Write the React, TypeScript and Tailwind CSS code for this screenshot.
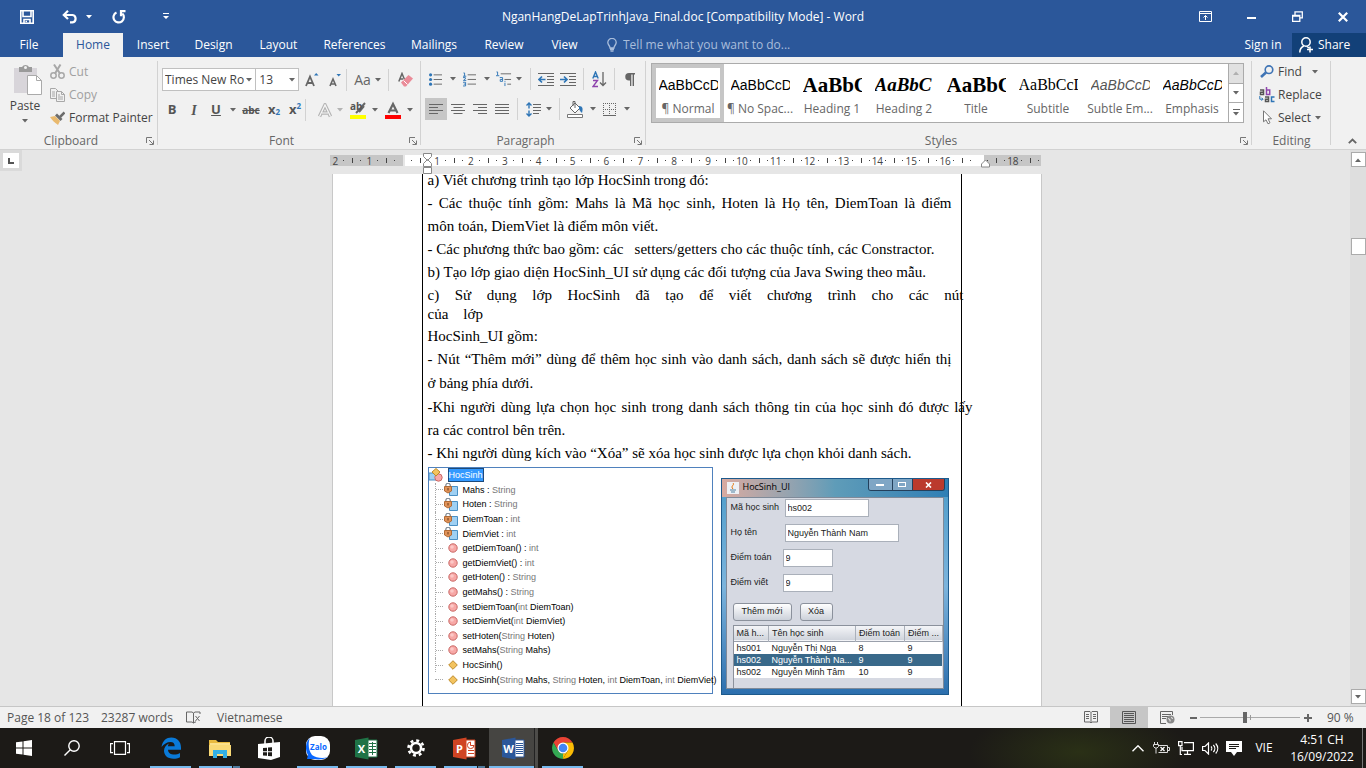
import React from "react";

const Caret = ({ className = "text-[#666]" }: { className?: string }) => (
  <svg width="6" height="4" viewBox="0 0 6 4" className={`shrink-0 ${className}`}>
    <path d="M0 0h6L3 3.5z" fill="currentColor" />
  </svg>
);

const Launcher = () => (
  <button aria-label="Open dialog" className="absolute bottom-1 right-1">
    <svg width="8" height="8" viewBox="0 0 8 8" fill="none" stroke="#777">
      <path d="M.5 6V.5H6M3 3l4 4M7.500 3.500v4h-4" />
    </svg>
  </button>
);

function Group({ label, className, children, launcher = true }: { label: string; className: string; children: React.ReactNode; launcher?: boolean }) {
  return (
    <section aria-label={label} className={`relative flex flex-col ${className}`}>
      <div className="h-[76px] shrink-0">{children}</div>
      <div className={`text-center leading-4 text-[#666] ${launcher ? "pr-4" : ""}`}>{label}</div>
      {launcher && <Launcher />}
      <div className="absolute bottom-1 right-0 top-1 w-px bg-[#d2d2d2]" />
    </section>
  );
}

const Slot = ({ label, className, children }: { label: string; className: string; children: React.ReactNode }) => (
  <button aria-label={label} className={`flex h-[22px] shrink-0 items-center justify-center ${className}`}>
    {children}
  </button>
);
const Sep = () => <span className="block h-[22px] w-px shrink-0 bg-[#d2d2d2]" />;

/* ---------- title bar ---------- */

function TitleBar() {
  return (
    <header className="relative flex h-[33px] shrink-0 items-center justify-between text-white">
      <div className="flex h-[30px] items-center pl-5">
        <button aria-label="Save">
          <svg width="14" height="14" viewBox="0 0 14 14" fill="none" stroke="#fff" strokeWidth="1.6">
            <path d="M.8.8h12.400v12.400H.8zM3 1v5.500h8V1M4 13V9.500h6V13" />
            <path d="M5.500 11.500h1.500" />
          </svg>
        </button>
        <button aria-label="Undo" className="ml-7">
          <svg width="16" height="14" viewBox="0 0 16 14" fill="none" stroke="#fff" strokeWidth="2.2">
            <path d="M2 5h8.500a3.700 3.700 0 0 1 0 7.300H8" />
            <path d="M6 .8L1.800 5 6 9" />
          </svg>
        </button>
        <span className="ml-2"><Caret className="text-white" /></span>
        <button aria-label="Repeat" className="ml-5">
          <svg width="14" height="14" viewBox="0 0 14 14" fill="none" stroke="#fff" strokeWidth="2.200">
            <path d="M4.500 2.500a5.200 5.200 0 1 0 5.800 1" />
            <path d="M13.500 1.200H9v5" />
          </svg>
        </button>
        <button aria-label="Customize toolbar" className="ml-[37px]">
          <svg width="6" height="7" viewBox="0 0 6 7" fill="#fff"><path d="M0 0h6v1H0zM0 3h6L3 6z" /></svg>
        </button>
      </div>
      <h1 className="absolute inset-x-0 text-center">NganHangDeLapTrinhJava_Final.doc [Compatibility Mode] - Word</h1>
      <div className="flex h-[30px] items-center">
        <button aria-label="Ribbon display" className="flex w-[46px] justify-center">
          <svg width="13" height="11" viewBox="0 0 13 11" fill="none" stroke="#fff">
            <path d="M.5.5h12v10H.5zM.5 2.500h12M6.500 9V4.500M4.500 6.500l2-2 2 2" />
          </svg>
        </button>
        <button aria-label="Minimize" className="flex w-[46px] justify-center"><span className="mt-[3px] h-[2px] w-[9px] bg-white" /></button>
        <button aria-label="Restore" className="flex w-[46px] justify-center">
          <svg width="11" height="11" viewBox="0 0 11 11" fill="none" stroke="#fff" strokeWidth="1.300">
            <path d="M.6 4.500h7.200v5.800H.6zM.6 5h7M3 4V.9h7.300v6H8" />
          </svg>
        </button>
        <button aria-label="Close" className="flex w-[46px] justify-center">
          <svg width="10" height="10" viewBox="0 0 10 10" stroke="#fff" strokeWidth="2.200"><path d="M.8.8l8.400 8.400M9.200.8L.8 9.200" /></svg>
        </button>
      </div>
    </header>
  );
}

const tabs: [string, string][] = [
  ["Insert", "w-[60px]"], ["Design", "w-[61px]"], ["Layout", "w-[69px]"], ["References", "w-[83px]"],
  ["Mailings", "w-[76px]"], ["Review", "w-[64px]"], ["View", "w-[57px]"],
];

function TabBar() {
  return (
    <nav className="flex h-6 shrink-0 items-stretch text-white">
      <button className="w-[58px]">File</button>
      <button className="ml-[5px] w-[60px] bg-[#f1f1f1] text-[#2b579a]">Home</button>
      {tabs.map(([t, w]) => <button key={t} className={w}>{t}</button>)}
      <label className="ml-[14px] flex flex-1 items-center text-[#a9bddb]">
        <svg width="10" height="14" viewBox="0 0 10 14" fill="none" stroke="currentColor" strokeWidth="1.300">
          <path d="M3 10C3 7.500.8 7 .8 4.600a4.200 4.200 0 0 1 8.400 0C9.200 7 7 7.500 7 10zM3 11.500h4M3.500 13.200h3" />
        </svg>
        <input aria-label="Tell me" placeholder="Tell me what you want to do..." className="ml-[6px] w-[220px] bg-transparent placeholder:text-[#a9bddb] placeholder:opacity-100" />
      </label>
      <button className="w-[58px]">Sign in</button>
      <button className="flex w-[74px] items-center gap-1 bg-[#124078] pl-[7px]">
        <svg width="15" height="16" viewBox="0 0 15 16" fill="none" stroke="#fff" strokeWidth="1.500">
          <circle cx="7" cy="5" r="4.200" />
          <path d="M.8 15.500c0-3.500 1.800-5.500 4-6.500M8 9.500l2 1.500M11 9.500v6M8 12.500h6" />
        </svg>
        Share
      </button>
    </nav>
  );
}

/* ---------- ribbon ---------- */

function ClipboardGroup() {
  return (
    <Group label="Clipboard" className="w-[158px] shrink-0">
      <div className="flex pt-[3px]">
        <button className="flex w-[50px] flex-col items-center pt-1">
          <svg width="29" height="31" viewBox="0 0 29 31" className="ml-1">
            <path d="M1 4h23v25H1z" fill="#d8d5da" />
            <path d="M6 3h3a4 4 0 0 1 7 0h3v5H6z" fill="#9a9a9a" /><circle cx="12.500" cy="3.500" r="1.500" fill="#f1f1f1" />
            <path d="M14.500 11.500h9l5 5v14h-14z" fill="#fff" stroke="#aaa" /><path d="M23.500 11.500v5h5" fill="none" stroke="#aaa" />
          </svg>
          <span className="mt-[3px] leading-4">Paste</span>
          <span className="mt-[5px]"><Caret /></span>
        </button>
        <div className="flex flex-col">
          <button className="flex h-[23px] items-center gap-1 text-[#a0a0a0]">
            <svg width="15" height="15" viewBox="0 0 15 15" fill="none" stroke="#a8a8a8" strokeWidth="1.500">
              <path d="M4 .5l6 9M10.500.5L5 9.500" strokeWidth="2" /><circle cx="3.500" cy="11.500" r="2.700" /><circle cx="11.500" cy="11.500" r="2.700" />
            </svg>
            Cut
          </button>
          <button className="flex h-[23px] items-center gap-1 text-[#a0a0a0]">
            <svg width="15" height="14" viewBox="0 0 15 14" fill="#f1f1f1" stroke="#a8a8a8">
              <path d="M.5.500h5l2.500 2.500v7.500H.5zM2 4h3M2 6h3M2 8h3" />
              <path d="M6.500 3.500h5l3 3v7h-8zM11.500 3.500v3h3M8 7h2M8 9h5M8 11h5" />
            </svg>
            Copy
          </button>
          <button className="flex h-[23px] items-center gap-1 whitespace-nowrap">
            <svg width="15" height="14" viewBox="0 0 15 14">
              <path d="M0 6l5-1 5 5-2 4C5 12 2 9 0 6z" fill="#e9b96e" />
              <path d="M5 4.500l2-2 5.500 5.500-2 2z" fill="#6c6c6c" /><path d="M10 6l4.500-4.500" stroke="#6c6c6c" strokeWidth="2.500" />
            </svg>
            Format Painter
          </button>
        </div>
      </div>
    </Group>
  );
}

function FontGroup() {
  return (
    <Group label="Font" className="w-[263px] shrink-0">
      <div className="flex items-center pl-1 pt-[11px]">
        <label className="relative flex w-[95px] items-center">
          <select aria-label="Font name" className="h-[23px] w-full appearance-none border border-[#c0c0c0] bg-white pl-[2px] text-[#444]"><option>Times New Ro</option></select>
          <span className="pointer-events-none absolute right-1"><Caret /></span>
        </label>
        <label className="relative -ml-px flex w-11 items-center">
          <select aria-label="Font size" className="h-[23px] w-full appearance-none border border-[#c0c0c0] bg-white pl-[3px] text-[#444]"><option>13</option></select>
          <span className="pointer-events-none absolute right-1"><Caret /></span>
        </label>
        <Slot label="Grow font" className="w-[25px]">
          <svg width="14" height="15" viewBox="0 0 14 15" fill="none"><path d="M1 14L5 4.500 9 14M2.500 11h5" stroke="#666" strokeWidth="1.800" /><path d="M9 3.500h4.500L11.200 1z" fill="#2e75b6" /></svg>
        </Slot>
        <Slot label="Shrink font" className="w-[22px]">
          <svg width="13" height="14" viewBox="0 0 13 14" fill="none"><path d="M1 13l3-7 3 7M2 11h4" stroke="#666" strokeWidth="1.600" /><path d="M7.500 1H12L9.700 3.500z" fill="#2e75b6" /></svg>
        </Slot>
        <Sep />
        <Slot label="Change case" className="w-[41px] gap-1 text-[14px] text-[#666]">Aa<Caret /></Slot>
        <Sep />
        <Slot label="Clear formatting" className="w-8">
          <svg width="15" height="15" viewBox="0 0 15 15" fill="none">
            <path d="M.8 9.500L4 1.500l2.500 6M2 7h3" stroke="#666" strokeWidth="1.500" />
            <path d="M3 10.500L10.500 3 15 6.500 8 14.500H6z" fill="#ea8b98" /><path d="M5.500 8.500l4 4" stroke="#fff" />
          </svg>
        </Slot>
      </div>
      <div className="flex items-center pl-[3px] pt-2 text-[#555]">
        <Slot label="Bold" className="w-[22px] text-[13px] font-bold">B</Slot>
        <Slot label="Italic" className="w-[22px] font-['Liberation_Serif'] text-[14px] font-bold italic">I</Slot>
        <Slot label="Underline" className="w-[22px] text-[13px] font-bold underline">U</Slot>
        <Slot label="Underline style" className="w-3"><Caret /></Slot>
        <Slot label="Strikethrough" className="w-[24px] text-[10px] font-bold line-through">abc</Slot>
        <Slot label="Subscript" className="w-[22px] text-[13px] font-bold">x<sub className="text-[8px] text-[#2e75b6]">2</sub></Slot>
        <Slot label="Superscript" className="w-[20px] text-[13px] font-bold">x<sup className="text-[8px] text-[#2e75b6]">2</sup></Slot>
        <Sep />
        <Slot label="Text effects" className="ml-2 w-[33px] gap-[5px]">
          <svg width="14" height="15" viewBox="0 0 14 15" fill="none"><path d="M1.500 13.500L7 2l5.500 11.500M4 10h6" stroke="#b4b4b4" strokeWidth="3.500" /><path d="M1.500 13.500L7 2l5.500 11.500M4 10h6" stroke="#f7f7f7" strokeWidth="1.200" /></svg>
          <Caret className="text-[#b4b4b4]" />
        </Slot>
        <Slot label="Highlight" className="w-[34px] gap-[6px]">
          <svg width="16" height="18" viewBox="0 0 16 18" fill="none" className="overflow-visible">
            <path d="M15 2l-6 7-3 3M14 5l-5 6" stroke="#666" strokeWidth="2" />
            <text x="0" y="9" fontSize="10" fontWeight="700" fill="#555">ab</text><path d="M0 14h16v4H0z" fill="#ff0" />
          </svg>
          <Caret />
        </Slot>
        <Slot label="Font color" className="w-[35px] gap-[6px]">
          <svg width="16" height="18" viewBox="0 0 16 18" fill="none"><path d="M3.500 12L8 3l4.500 9M5 9.500h6" stroke="#666" strokeWidth="2.200" /><path d="M0 14h16v4H0z" fill="red" /></svg>
          <Caret />
        </Slot>
      </div>
    </Group>
  );
}

const Lines = ({ d }: { d: string }) => (
  <svg width="14" height="12" viewBox="0 0 14 12" fill="none" stroke="#666"><path d={d} /></svg>
);

function ParagraphGroup() {
  return (
    <Group label="Paragraph" className="w-[225px] shrink-0">
      <div className="flex items-center pl-2 pt-[11px]">
        <Slot label="Bullets" className="w-[27px] gap-2">
          <svg width="14" height="15" viewBox="0 0 14 15"><path d="M5 2.500h9M5 7.500h9M5 12.500h9" stroke="#666" /><g fill="#2e75b6"><circle cx="1.700" cy="2.500" r="1.700" /><circle cx="1.700" cy="7.500" r="1.700" /><circle cx="1.700" cy="12.500" r="1.700" /></g></svg>
          <Caret />
        </Slot>
        <Slot label="Numbering" className="ml-[7px] w-[27px] gap-2">
          <svg width="14" height="16" viewBox="0 0 14 16" fill="none">
            <path d="M5 3.500h9M5 8.500h9M5 13.500h9" stroke="#666" />
            <path d="M.5 1.500h1.200v3.500M0 5h3.500M0 6.500h2.500v1.500L.5 9.500h3M0 11.500h2.800v4H0M.8 13.500h2" stroke="#2e75b6" />
          </svg>
          <Caret />
        </Slot>
        <Slot label="Multilevel list" className="ml-[6px] w-[26px] gap-1">
          <svg width="17" height="16" viewBox="0 0 17 16" fill="none">
            <path d="M5 2.500h11M9 8.500h7M12 13.500h4" stroke="#666" />
            <path d="M.5.500h1.200V4M0 4.500h3.500M4 6.500h3v4H4.500v-2H7M9.500 12v3.500M9.500 10v1" stroke="#2e75b6" />
          </svg>
          <Caret />
        </Slot>
        <span className="ml-[8px]"><Sep /></span>
        <Slot label="Decrease indent" className="ml-1 w-[22px]">
          <svg width="16" height="13" viewBox="0 0 16 13"><path d="M0 .5h16M9 3.500h7M9 6.500h7M9 9.500h7M0 12.500h16" stroke="#666" /><path d="M7.500 6.500H1.500M4 3.500l-3 3 3 3" stroke="#2e75b6" strokeWidth="1.700" fill="none" /></svg>
        </Slot>
        <Slot label="Increase indent" className="w-[22px]">
          <svg width="16" height="13" viewBox="0 0 16 13"><path d="M0 .5h16M9 3.500h7M9 6.500h7M9 9.500h7M0 12.500h16" stroke="#666" /><path d="M0 6.500h6.500M4 3.500l3 3-3 3" stroke="#2e75b6" strokeWidth="1.700" fill="none" /></svg>
        </Slot>
        <span className="ml-1"><Sep /></span>
        <Slot label="Sort" className="w-[30px]">
          <svg width="15" height="17" viewBox="0 0 15 17" fill="none"><path d="M.8 7.500L3.500 1l2.700 6.500M2 5.500h3" stroke="#2e75b6" strokeWidth="1.400" /><path d="M1 9.500h4.500l-4.500 6h5" stroke="#8e44ad" strokeWidth="1.400" /><path d="M11 1v13.500M8 11.500l3 3 3-3" stroke="#666" strokeWidth="1.300" /></svg>
        </Slot>
        <Sep />
        <Slot label="Show marks" className="w-[29px]">
          <svg width="10" height="13" viewBox="0 0 10 13"><path d="M5 7.500H4a3.700 3.700 0 0 1 0-7.500h6v1.400H9V13H7.600V1.400H6.300V13H5z" fill="#666" /></svg>
        </Slot>
      </div>
      <div className="flex items-center pl-1 pt-2">
        <Slot label="Align left" className="w-[22px] bg-[#c6c6c6]"><Lines d="M0 1.500h14M0 4.500h9M0 7.500h14M0 10.500h9" /></Slot>
        <Slot label="Center" className="w-[22px]"><Lines d="M0 1.500h14M2.500 4.500h9M0 7.500h14M2.500 10.500h9" /></Slot>
        <Slot label="Align right" className="w-[22px]"><Lines d="M0 1.500h14M5 4.500h9M0 7.500h14M5 10.500h9" /></Slot>
        <Slot label="Justify" className="w-[22px]"><Lines d="M0 1.500h14M0 4.500h14M0 7.500h14M0 10.500h14" /></Slot>
        <span className="ml-1"><Sep /></span>
        <Slot label="Line spacing" className="ml-[7px] w-[28px] gap-[5px]">
          <svg width="15" height="15" viewBox="0 0 15 15" fill="none"><path d="M7 2.500h8M7 5.500h8M7 8.500h8M7 11.500h6" stroke="#666" /><path d="M3 1v5.500M3 8.500V14M.5 3.500L3 1l2.500 2.500M.5 11.500L3 14l2.500-2.500" stroke="#2e75b6" strokeWidth="1.400" /></svg>
          <Caret />
        </Slot>
        <span className="ml-[6px]"><Sep /></span>
        <Slot label="Shading" className="ml-[6px] w-[30px] gap-[6px]">
          <svg width="17" height="17" viewBox="0 0 17 17" fill="none"><path d="M3 7l5-5 5 5-5 5z" fill="#fff" stroke="#666" /><path d="M6 5V.5h2V7" stroke="#666" /><path d="M12 5c4 0 4 3 3 7-1-1-2-2-3-4z" fill="#2e75b6" /><path d="M.5 13.500h15v3H.5z" fill="#fff" stroke="#777" /></svg>
          <Caret />
        </Slot>
        <Slot label="Borders" className="ml-1 w-[32px] gap-2">
          <svg width="13" height="13" viewBox="0 0 13 13" stroke="#666" fill="none"><path d="M0 .5h13M0 6.500h13M.5 0v12M6.500 0v12M12.500 0v12" strokeDasharray="1 1" /><path d="M0 12.500h13" /></svg>
          <Caret />
        </Slot>
      </div>
    </Group>
  );
}

const styles: [string, string, string][] = [
  ["AaBbCcD", "¶ Normal", "font-['Liberation_Sans'] text-[14px] text-black"],
  ["AaBbCcD", "¶ No Spac...", "font-['Liberation_Sans'] text-[14px] text-black"],
  ["AaBbC", "Heading 1", "font-['Liberation_Serif'] text-[21px] font-bold text-black"],
  ["AaBbC", "Heading 2", "font-['Liberation_Serif'] text-[19px] font-bold italic text-black"],
  ["AaBbC", "Title", "font-['Liberation_Serif'] text-[21px] font-bold text-black"],
  ["AaBbCcD", "Subtitle", "font-['Liberation_Serif'] text-[16px] text-black"],
  ["AaBbCcD", "Subtle Em...", "font-['Liberation_Sans'] text-[14px] italic text-[#555]"],
  ["AaBbCcD", "Emphasis", "font-['Liberation_Sans'] text-[14px] italic text-black"],
];

function StylesGroup() {
  return (
    <Group label="Styles" className="min-w-0 flex-1">
      <div className="ml-[5px] mr-2 mt-[6px] flex h-[60px] border border-[#ababab] bg-white">
        {styles.map(([sample, name, cls], i) => (
          <button key={name} className={`flex min-w-0 flex-1 flex-col items-center border-4 pt-px ${i === 0 ? "border-[#c6c6c6]" : "border-transparent"}`}>
            <span className={`h-8 w-[59px] overflow-hidden whitespace-nowrap text-left leading-8 ${cls}`}>{sample}</span>
            <span className="whitespace-nowrap leading-4 text-[#666]">{name}</span>
          </button>
        ))}
        <div className="flex w-[15px] flex-col divide-y divide-[#ababab] border-l border-[#ababab]">
          <button aria-label="Scroll up" className="flex flex-1 items-center justify-center bg-[#e1e1e1]"><span className="rotate-180"><Caret className="text-[#b0b0b0]" /></span></button>
          <button aria-label="Scroll down" className="flex flex-1 items-center justify-center"><Caret /></button>
          <button aria-label="More styles" className="flex flex-1 flex-col items-center justify-center gap-[2px]"><span className="h-px w-[7px] bg-[#666]" /><Caret /></button>
        </div>
      </div>
    </Group>
  );
}

function EditingGroup() {
  return (
    <Group label="Editing" className="w-[79px] shrink-0" launcher={false}>
      <div className="flex flex-col pl-2 pt-[3px]">
        <button className="flex h-[23px] items-center">
          <svg width="14" height="13" viewBox="0 0 14 13" fill="none" stroke="#3f74b5"><circle cx="9" cy="4.700" r="3.800" strokeWidth="1.600" /><path d="M6 7.500L1 12" strokeWidth="2.600" /></svg>
          <span className="ml-1 mr-[10px]">Find</span><Caret />
        </button>
        <button className="flex h-[23px] items-center gap-[3px]">
          <svg width="16" height="16" viewBox="0 0 16 16" fill="none" strokeWidth="1.500" className="-ml-px shrink-0">
            <path d="M1 3h3.500v4.500H1.500V5.200h3" stroke="#555" /><path d="M7.500 0v7.500h3.200V3H7.500" stroke="#8e44ad" />
            <path d="M6 10h3.500v4.500H6.500v-2.300h3" stroke="#555" /><path d="M15.500 10h-3v4.500h3" stroke="#2e75b6" />
            <path d="M.8 9v3.200h3M2.500 10.700l1.500 1.500-1.500 1.500" stroke="#2e75b6" strokeWidth="1" />
          </svg>
          Replace
        </button>
        <button className="flex h-[23px] items-center">
          <svg width="14" height="15" viewBox="0 0 14 15" fill="#fff" stroke="#777"><path d="M3.500.8v11l2.500-2 2 4 2-1-2-4h3.500z" /></svg>
          <span className="ml-1 mr-1">Select</span><Caret />
        </button>
      </div>
    </Group>
  );
}

/* ---------- document ---------- */

const UNIT = 33.87;
function Ruler() {
  const nums = Array.from({ length: 21 }, (_, i) => i - 2);
  return (
    <svg width="709" height="24" className="block overflow-visible" fontSize="10" fill="#444">
      <path d="M-2 5h73v11H-2zM652 5h57v11h-57z" fill="#c6c6c6" />
      <path d="M73 5h579v11H73z" fill="#fff" />
      {nums.map((n) => {
        const x = 71.200 + UNIT * n;
        return (
          <g key={n}>
            {n !== 0 && n !== 17 && <text x={x} y="14.500" textAnchor="middle">{Math.abs(n)}</text>}
            {x + 8 < 706 && <path d={`M${Math.round(x + 8)} 10h1v1h-1zM${Math.round(x + 17)} 8h1v5h-1z`} />}
            {x + 25 < 709 && <path d={`M${Math.round(x + 25)} 10h1v1h-1z`} />}
          </g>
        );
      })}
      <g fill="#fff" stroke="#888">
        <path d="M91.500 3.500h8v3l-4 4-4-4zM91.500 16.500v-3l4-4 4 4v3zM91.500 17.500h8v6h-8z" />
        <path d="M649.500 17v-3l4-4 4 4v3z" />
      </g>
    </svg>
  );
}

const paragraphs: [string, string][] = [
  ["a) Viết chương trình tạo lớp HocSinh trong đó:", "leading-[23px]"],
  ["- Các thuộc tính gồm: Mahs là Mã học sinh, Hoten là Họ tên, DiemToan là điểm", "w-[524px] leading-[23px] [text-align-last:justify]"],
  ["môn toán, DiemViet là điểm môn viết.", "leading-[23px]"],
  ["- Các phương thức bao gồm: các \u00a0 setters/getters cho các thuộc tính, các Constractor.", "leading-[23px]"],
  ["b) Tạo lớp giao diện HocSinh_UI sử dụng các đối tượng của Java Swing theo mẫu.", "leading-[23px]"],
  ["c) Sử dụng lớp HocSinh đã tạo để viết chương trình cho các nút", "w-[536px] leading-[23px] [text-align-last:justify]"],
  ["của \u00a0\u00a0 lớp", "leading-[14px]"],
  ["HocSinh_UI gồm:", "pt-1 leading-[23px]"],
  ["- Nút “Thêm mới” dùng để thêm học sinh vào danh sách, danh sách sẽ được hiển thị", "w-[524px] leading-[23px] [text-align-last:justify]"],
  ["ở bảng phía dưới.", "leading-6"],
  ["-Khi người dùng lựa chọn học sinh trong danh sách thông tin của học sinh đó được lấy", "w-[545px] leading-6 [text-align-last:justify]"],
  ["ra các control bên trên.", "leading-[23px]"],
  ["- Khi người dùng kích vào “Xóa” sẽ xóa học sinh được lựa chọn khỏi danh sách.", "leading-[23px]"],
];

const members: [string, string][] = [
  ["field", "Mahs : |String"], ["field", "Hoten : |String"], ["field", "DiemToan : |int"], ["field", "DiemViet : |int"],
  ["method", "getDiemToan() : |int"], ["method", "getDiemViet() : |int"], ["method", "getHoten() : |String"], ["method", "getMahs() : |String"],
  ["method", "setDiemToan(|int| DiemToan)"], ["method", "setDiemViet(|int| DiemViet)"], ["method", "setHoten(|String| Hoten)"], ["method", "setMahs(|String| Mahs)"],
  ["ctor", "HocSinh()"], ["ctor", "HocSinh(|String| Mahs, |String| Hoten, |int| DiemToan, |int| DiemViet)"],
];

function MemberIcon({ kind }: { kind: string }) {
  if (kind === "field")
    return <svg width="14" height="13" viewBox="0 0 14 13"><path d="M5.500 3.500h8v9h-8z" fill="#9fd0f3" stroke="#4a90c4" /><path d="M1.800 4V2.500a2.200 2.200 0 0 1 4.500 0V4" fill="none" stroke="#7d8894" strokeWidth="1.200" /><path d="M.5 3.500h7v4.500L4 10 .5 8z" fill="#e0935a" stroke="#b06a35" /><path d="M4 5v2.500" stroke="#6b3a15" /></svg>;
  if (kind === "method")
    return <svg width="10" height="10" viewBox="0 0 10 10"><circle cx="5" cy="5" r="4.200" fill="#f7a8a6" stroke="#c96866" /><circle cx="4" cy="4" r="1.800" fill="#fcc9c7" /></svg>;
  return <svg width="10" height="10" viewBox="0 0 10 10"><path d="M5 .7L9.300 5 5 9.300.7 5z" fill="#f3c35f" stroke="#bd8a2c" /></svg>;
}

function MemberTree() {
  return (
    <div className="flex h-[227px] w-[285px] shrink-0 flex-col border border-[#4f81bd] bg-white pb-[6px] font-['Liberation_Sans',sans-serif] text-[9px] text-black">
      <div className="flex flex-1 items-center">
        <svg width="14" height="14" viewBox="0 0 14 14"><path d="M0 5h7v7H0z" fill="#9fd0f3" stroke="#4a90c4" /><circle cx="9.500" cy="9.500" r="3.700" fill="#f7a8a6" stroke="#c96866" /><path d="M7 .5L11 4 7 8 3 4z" fill="#f3c35f" stroke="#bd8a2c" /></svg>
        <span className="ml-[5px] border border-[#1c4a7a] bg-[#3399ff] leading-[12px] text-white">HocSinh</span>
      </div>
      {members.map(([kind, sig], i) => (
        <div key={sig} className="flex flex-1 items-center">
          <span className={`ml-[6px] flex w-2 shrink-0 self-stretch border-dotted border-[#aaa] ${i < members.length - 1 ? "items-center border-l" : "items-center"}`}>
            <span className="w-full border-t border-dotted border-[#aaa]" />
          </span>
          <span className={`flex w-[20px] shrink-0 ${kind === "field" ? "pl-[1px]" : "pl-[5px]"}`}><MemberIcon kind={kind} /></span>
          <span className="whitespace-pre leading-3">
            {sig.split("|").map((p, j) => <span key={j} className={j % 2 ? "text-[#777]" : ""}>{p}</span>)}
          </span>
        </div>
      ))}
    </div>
  );
}

function Field({ id, label, value, short = false, box }: { id: string; label: string; value: string; short?: boolean; box: string }) {
  return (
    <div className="flex h-[18px] items-center">
      <label htmlFor={id} className={`${short ? "w-[52px]" : "w-[54px]"} shrink-0 whitespace-nowrap`}>{label}</label>
      <input id={id} defaultValue={value} className={`h-[18px] border border-[#aab0ba] bg-white pl-[2px] ${box}`} />
    </div>
  );
}

const javaButton = "h-[18px] rounded-[3px] border border-[#8b919c] bg-linear-to-b from-white to-[#ccd1da]";

function JavaWindow() {
  return (
    <div className="ml-2 mt-[11px] flex h-[217px] w-[228px] shrink-0 flex-col border border-[#1d5a8c] bg-linear-to-b from-[#4b9cc9] via-[#7cb4dc] to-[#2c6fae] px-1 pb-[5px] font-['Liberation_Sans',sans-serif] text-[9px] text-[#222]">
      <div className="-mx-1 flex h-[18px] shrink-0 items-start bg-linear-to-r from-[#d8aaa0] via-[#5f9cb8] to-[#2f7fb5]">
        <svg width="12" height="12" viewBox="0 0 12 12" className="ml-[5px] mt-[3px]"><path d="M0 0h12v12H0z" fill="#eef1f5" /><path d="M6 1c2 2-3 3 0 6" stroke="#e76f00" fill="none" /><path d="M3 8h6M4 10h4" stroke="#5382a1" /></svg>
        <span className="ml-1 mt-[2px] flex-1 font-['Open_Sans'] leading-3 text-black">HocSinh_UI</span>
        <div className="mr-[3px] flex h-3 overflow-hidden rounded-b-[3px] border border-t-0 border-[#23405c] text-white">
          <button aria-label="Minimize" className="flex w-[24px] items-center justify-center border-r border-[#23405c] bg-[#7fa6c5]"><span className="h-[2px] w-2 bg-white" /></button>
          <button aria-label="Maximize" className="flex w-[20px] items-center justify-center border-r border-[#23405c] bg-[#7fa6c5]"><span className="h-[5px] w-2 border border-white" /></button>
          <button aria-label="Close window" className="flex w-[31px] items-center justify-center bg-[#bb3a2d]">
            <svg width="7" height="6" viewBox="0 0 7 6" stroke="#fff" strokeWidth="1.600"><path d="M1 .5l5 5M6 .5l-5 5" /></svg>
          </button>
        </div>
      </div>
      <div className="flex flex-1 flex-col border border-[#7f8a99] bg-[#d6d9e2]">
        <div className="flex flex-col gap-[7px] pl-1 pt-px">
          <Field id="ma" label="Mã học sinh" value="hs002" box="w-[84px]" />
          <Field id="ten" label="Họ tên" value="Nguyễn Thành Nam" box="w-[114px]" />
          <Field id="toan" label="Điểm toán" value="9" short box="w-[50px]" />
          <Field id="viet" label="Điểm viết" value="9" short box="w-[50px]" />
        </div>
        <div className="mt-[11px] flex gap-2 pl-[6px]">
          <button className={`w-[59px] ${javaButton}`}>Thêm mới</button>
          <button className={`w-[33px] ${javaButton}`}>Xóa</button>
        </div>
        <div className="ml-[6px] mt-1 flex-1 border-l border-t border-[#8b919c]">
          <table className="w-full table-fixed border-collapse whitespace-nowrap text-left">
            <colgroup><col className="w-[35px]" /><col className="w-[87px]" /><col className="w-[49px]" /><col /></colgroup>
            <thead>
              <tr className="h-[15px] border-b border-[#9aa0ab] bg-linear-to-b from-[#f4f5f8] to-[#d0d4dc]">
                {["Mã h...", "Tên học sinh", "Điểm toán", "Điểm ..."].map((h) => <th key={h} className="border-r border-[#aab0ba] pl-[3px] font-normal leading-3">{h}</th>)}
              </tr>
            </thead>
            <tbody>
              {[["hs001", "Nguyễn Thị Nga", "8", "9"], ["hs002", "Nguyễn Thành Na...", "9", "9"], ["hs002", "Nguyễn Minh Tâm", "10", "9"]].map((r, i) => (
                <tr key={r[1]} className={`h-3 ${i === 1 ? "bg-[#39698a] text-white" : "bg-white"}`}>
                  {r.map((c, j) => <td key={j} className="pl-[3px] leading-3">{c}</td>)}
                </tr>
              ))}
            </tbody>
          </table>
        </div>
      </div>
    </div>
  );
}

function ScrollBar() {
  const btn = "flex h-[15px] w-[15px] items-center justify-center border border-[#ababab] bg-white";
  return (
    <div className="flex w-4 shrink-0 flex-col items-center bg-[#dedede] pb-[2px] pt-[2px]">
      <button aria-label="Scroll page up" className={btn}><span className="rotate-180"><Caret /></span></button>
      <div className="flex-1 pt-[71px]"><div className="h-[17px] w-[15px] border border-[#ababab] bg-white" /></div>
      <button aria-label="Scroll page down" className={btn}><Caret /></button>
    </div>
  );
}

function DocumentArea() {
  return (
    <main className="flex min-h-0 flex-1 bg-[#e6e6e6]">
      <div className="w-[23px] shrink-0">
        <button aria-label="Tab stop" className="flex h-[21px] w-[22px] items-center justify-center border-[3px] border-[#dadada] bg-white">
          <svg width="6" height="6" viewBox="0 0 6 6"><path d="M1 0v5h5" fill="none" stroke="#555" strokeWidth="2" /></svg>
        </button>
      </div>
      <div className="flex min-w-0 flex-1 justify-center">
        <div className="flex w-[710px] flex-col">
          <Ruler />
          <article className="min-h-0 flex-1 overflow-hidden border-x border-[#c8c8c8] bg-white">
            <div className="ml-[89px] flex h-full w-[540px] flex-col border-x border-black pl-[5px]">
              <div className="-mt-[5px] whitespace-nowrap font-['Liberation_Serif',serif] text-[15px] text-black">
                {paragraphs.map(([t, c]) => <p key={t} className={c}>{t}</p>)}
              </div>
              <div className="flex items-start pt-[2px]">
                <MemberTree />
                <JavaWindow />
              </div>
            </div>
          </article>
        </div>
      </div>
      <ScrollBar />
    </main>
  );
}

/* ---------- status bar ---------- */

function StatusBar() {
  return (
    <footer className="flex h-[22px] shrink-0 items-center border-t border-[#c6c6c6] bg-[#f1f1f1] pl-[7px] text-[#555]">
      <span className="w-[94px]">Page 18 of 123</span>
      <span className="w-[85px]">23287 words</span>
      <svg width="15" height="13" viewBox="0 0 15 13" fill="none" stroke="#666"><path d="M7.500 2L6 1H.5v10H6l1.500 1L9 11h1M7.500 2v10M7.500 2L9 1h5v2M9.500 5l4 5M13.500 5l-4 5" /></svg>
      <span className="ml-4 flex-1">Vietnamese</span>
      <button aria-label="Read mode" className="flex w-[38px] justify-center">
        <svg width="14" height="13" viewBox="0 0 14 13" fill="none" stroke="#666"><path d="M.5.500H6l1 1 1-1h5.500v10.500H8l-1 1-1-1H.5zM7 1.500V12M2 3.500h3M2 5.500h3M2 7.500h3M9 3.500h3M9 5.500h3M9 7.500h3" /></svg>
      </button>
      <button aria-label="Print layout" className="flex h-full w-[38px] items-center justify-center bg-[#c6c6c6]">
        <svg width="14" height="13" viewBox="0 0 14 13" fill="none" stroke="#555"><path d="M.5.500h13v12H.5zM2 2.500h10M2 4.500h10M2 6.500h10M2 8.500h10M2 10.500h10" /></svg>
      </button>
      <button aria-label="Web layout" className="flex w-[38px] justify-center">
        <svg width="15" height="13" viewBox="0 0 15 13" fill="none" stroke="#666"><path d="M6 12.500H.5V.5h12V4M2 3.500h9M2 5.500h6M2 7.500h4" /><circle cx="10.500" cy="8.500" r="4" fill="#888" stroke="none" /><path d="M8 7.500l2 1v2M11.500 6l1 2" stroke="#f1f1f1" /></svg>
      </button>
      <button aria-label="Zoom out" className="ml-1 h-[2px] w-[7px] bg-[#666]" />
      <input type="range" aria-label="Zoom" min={0} max={100} defaultValue={45} className="ml-[3px] h-3 w-[100px] appearance-none bg-[linear-gradient(#999,#999),linear-gradient(#aaa,#aaa)] bg-[length:1px_5px,100%_1px] bg-center bg-no-repeat [&::-webkit-slider-thumb]:h-[11px] [&::-webkit-slider-thumb]:w-1 [&::-webkit-slider-thumb]:appearance-none [&::-webkit-slider-thumb]:bg-[#666]" />
      <button aria-label="Zoom in" className="ml-1">
        <svg width="8" height="8" viewBox="0 0 8 8"><path d="M3 0h2v3h3v2H5v3H3V5H0V3h3z" fill="#666" /></svg>
      </button>
      <span className="w-[54px] whitespace-nowrap pl-[15px]">90 %</span>
    </footer>
  );
}

/* ---------- taskbar ---------- */

const office = (letter: string, color: string, sheet: React.ReactNode) => (
  <svg width="23" height="23" viewBox="0 0 23 23">
    <path d="M12 3h10v17H12z" fill="#fff" stroke={color} />
    {sheet}
    <path d="M0 3L13.500.5v22L0 20z" fill={color} />
    <text x="6.500" y="15.500" textAnchor="middle" fontSize="11" fontWeight="700" fill="#fff">{letter}</text>
  </svg>
);

const apps: { name: string; icon: React.ReactNode; bar?: boolean; active?: boolean; stacked?: boolean }[] = [
  { name: "Edge", bar: true, icon: <svg width="20" height="22" viewBox="0 0 20 22"><path d="M.5 10C1.500 3.500 5.500.5 10.300.5 16.500.5 20 5 20 10.500v2.200H7c.2 3.300 3 4.800 6.300 4.800 2 0 4-.5 5.700-1.500v4.300c-2 1-4.300 1.500-6.500 1.500C6.500 21.800 3 18.200 3 13.800 3 10.500 5 8 8 6.500 7.300 7.300 7 8.300 6.900 9.300h6.800c0-2.800-1.400-4.300-4.200-4.300C6 5 2.800 7 .5 10z" fill="#0a7ad8" /></svg> },
  { name: "File Explorer", bar: true, stacked: true, icon: <svg width="22" height="19" viewBox="0 0 22 19"><path d="M0 1h7l2 2h12v4H0z" fill="#e8b93e" /><path d="M1 4h20v13H1z" fill="#fbe08a" /><path d="M0 6h22v11H0z" fill="#f9d976" /><path d="M4 19v-8h14v8h-4v-4H8v4z" fill="#31b0e6" /></svg> },
  { name: "Store", icon: <svg width="22" height="23" viewBox="0 0 22 23"><path d="M7 7V4a4 4 0 0 1 8 0v2" fill="none" stroke="#fff" strokeWidth="1.500" /><path d="M0 7l22-2v15l-9 3L0 21z" fill="#fff" /><path d="M5 11l4-.3v3.600H5zM10 10.600l4-.4v4.100h-4zM5 15.200h4v3.600l-4-.3zM10 15.200h4v4.100l-4-.4z" fill="#1d1b18" /></svg> },
  { name: "Zalo", bar: true, icon: <svg width="24" height="24" viewBox="0 0 24 24"><rect width="24" height="24" rx="9" fill="#fff" /><path d="M4 2C-1 6-1 14 2 19l-1 4h6c7 1 12 0 15-2-5 2-12 1-16-2C2 14 2 6 4 2z" fill="#0a68ff" /><text x="12.500" y="14" textAnchor="middle" fontSize="8" fontWeight="700" fill="#0a68ff">Zalo</text></svg> },
  { name: "Excel", bar: true, icon: office("X", "#1f7346", <path d="M14 6.500h7M14 9.500h7M14 12.500h7M14 15.500h7M17.500 5v13" stroke="#1f7346" />) },
  { name: "Settings", bar: true, icon: <svg width="18" height="18" viewBox="0 0 18 18" fill="none" stroke="#fff"><circle cx="9" cy="9" r="5" strokeWidth="2.500" /><circle cx="9" cy="9" r="7.500" strokeWidth="2.600" strokeDasharray="2.950 2.940" /></svg> },
  { name: "PowerPoint", bar: true, stacked: true, icon: office("P", "#d04423", <path d="M15 13.500h6M15 16.500h6M17.500 5v3.500H21a3.300 3.300 0 1 1-3.500-3.500" stroke="#d04423" fill="none" />) },
  { name: "Word", bar: true, active: true, icon: office("W", "#2b579a", <path d="M14 6.500h7M14 8.500h7M14 10.500h7M14 12.500h7M14 14.500h7M14 16.500h7" stroke="#2b579a" />) },
  { name: "Chrome", bar: true, icon: <svg width="22" height="22" viewBox="0 0 22 22"><path d="M1.500 5.500L6.200 13.700 11 5.500h9.500a11 11 0 0 0-19 0z" fill="#ea4335" /><path d="M11 5.500h9.500A11 11 0 0 1 11 22l5-8.500z" fill="#fbbc05" /><path d="M6.200 13.700a5.500 5.500 0 0 0 4.800 2.800V22A11 11 0 0 1 1.500 5.500z" fill="#34a853" /><path d="M11 22l4.800-8.300A5.500 5.500 0 0 1 11 16.500z" fill="#fbbc05" /><circle cx="11" cy="11" r="5.500" fill="#fff" /><circle cx="11" cy="11" r="4.300" fill="#4285f4" /></svg> },
];

function TaskBar() {
  const sys = "flex w-12 items-center justify-center";
  return (
    <div className="flex h-10 shrink-0 items-stretch bg-[#1c1a17] bg-[radial-gradient(ellipse_110px_44px_at_79%_60%,#2a3016,#1c1a17)] text-white">
      <button aria-label="Start" className={sys}><svg width="16" height="16" viewBox="0 0 16 16" fill="#fff"><path d="M0 2.300L6.500 1.400v6.100H0zM7.500 1.200L16 0v7.500H7.500zM0 8.500h6.500v6.100L0 13.700zM7.500 8.500H16V16l-8.500-1.200z" /></svg></button>
      <button aria-label="Search" className={sys}><svg width="16" height="16" viewBox="0 0 16 16" fill="none" stroke="#fff" strokeWidth="1.400"><circle cx="10" cy="6" r="5.200" /><path d="M6.300 9.700L.5 15.500" /></svg></button>
      <button aria-label="Task view" className={sys}><svg width="20" height="14" viewBox="0 0 20 14" fill="none" stroke="#fff" strokeWidth="1.200"><path d="M4.500.6h11v12.800h-11zM3 2.600H.6v9H3M17 2.600h2.400v9H17" /></svg></button>
      <div className="ml-[2px] flex flex-1">
        {apps.map((a) => (
          <button key={a.name} aria-label={a.name} className="relative flex w-[49px] items-center justify-center">
            {a.active && <span className="absolute inset-y-0 left-0 right-0 bg-[#464542]" />}
            {a.active && <span className="absolute inset-y-0 right-0 w-1 border-l border-[#222] bg-[#4d4c49]" />}
            <span className="relative">{a.icon}</span>
            {a.bar && <span className={`absolute bottom-0 h-[2px] bg-[#76b9ed] ${a.active ? "left-0 right-1" : "inset-x-1"}`} />}
            {a.stacked && <span className="absolute bottom-0 right-1 h-[2px] w-2 border-l border-[#1c1a17] bg-[#4f7b9d]" />}
          </button>
        ))}
      </div>
      <div className="flex items-center">
        <button aria-label="Hidden icons" className="flex w-[23px] justify-center"><svg width="12" height="7" viewBox="0 0 12 7" fill="none" stroke="#fff" strokeWidth="1.400"><path d="M.5 6.200L6 .8l5.500 5.400" /></svg></button>
        <button aria-label="Battery" className="flex w-6 justify-center"><svg width="17" height="12" viewBox="0 0 17 12" fill="none" stroke="#ddd"><path d="M1.500 0v2M4.500 0v2M.5 2.500h5v2L4 6H2L.5 4.500zM3 6v5.500M5.500 3.500h9v7h-9M15 5.500h1.500v3H15" /><path d="M7.500 5l4 4M11.500 5l-4 4" stroke="#fff" strokeWidth="1.300" /></svg></button>
        <button aria-label="Network" className="flex w-[25px] justify-center"><svg width="16" height="14" viewBox="0 0 16 14" fill="none" stroke="#fff" strokeWidth="1.200"><path d="M6 1.600h9.400v8H4V6M9.500 10v3M6 13.400h7M.6.600h3.400v4H.6zM2.300 5v8.500H4" /></svg></button>
        <button aria-label="Volume" className="flex w-6 justify-center"><svg width="17" height="13" viewBox="0 0 17 13" fill="none" stroke="#fff" strokeWidth="1.200"><path d="M.6 4.500h2.400L6.500 1v11L3 8.500H.6zM9 4.500c1 1 1 3 0 4M11.300 3c2 2 2 5 0 7M13.700 1.500c2.700 3 2.700 7 0 10" /></svg></button>
        <button aria-label="Notifications" className="flex w-6 justify-center"><svg width="16" height="15" viewBox="0 0 16 15"><path d="M0 0h16v11h-5l-3 4-3-4H0z" fill="#fff" /><path d="M3 3.500h10M3 5.500h10M3 7.500h7" stroke="#1c1a17" /></svg></button>
        <span className="w-[36px] text-center">VIE</span>
        <time className="flex w-[80px] flex-col items-center whitespace-nowrap leading-[17px]"><span>4:51 CH</span><span>16/09/2022</span></time>
        <span className="h-10 w-1 border-l border-[#777]" />
      </div>
    </div>
  );
}

export default function App() {
  return (
    <div className="flex h-screen min-h-[600px] flex-col overflow-hidden bg-[#2b579a] font-['Open_Sans','Noto_Sans',sans-serif] text-[12px] text-[#444]">
      <TitleBar />
      <TabBar />
      <div className="flex h-[93px] shrink-0 border-b border-[#d2d2d2] bg-[#f1f1f1]">
        <ClipboardGroup />
        <FontGroup />
        <ParagraphGroup />
        <StylesGroup />
        <EditingGroup />
        <button aria-label="Collapse ribbon" className="flex w-[35px] shrink-0 items-end justify-center pb-[5px] pl-[7px]">
          <svg width="9" height="6" viewBox="0 0 9 6" fill="none" stroke="#666" strokeWidth="1.800"><path d="M.8 5.200l3.700-3.700 3.700 3.700" /></svg>
        </button>
      </div>
      <DocumentArea />
      <StatusBar />
      <TaskBar />
    </div>
  );
}
